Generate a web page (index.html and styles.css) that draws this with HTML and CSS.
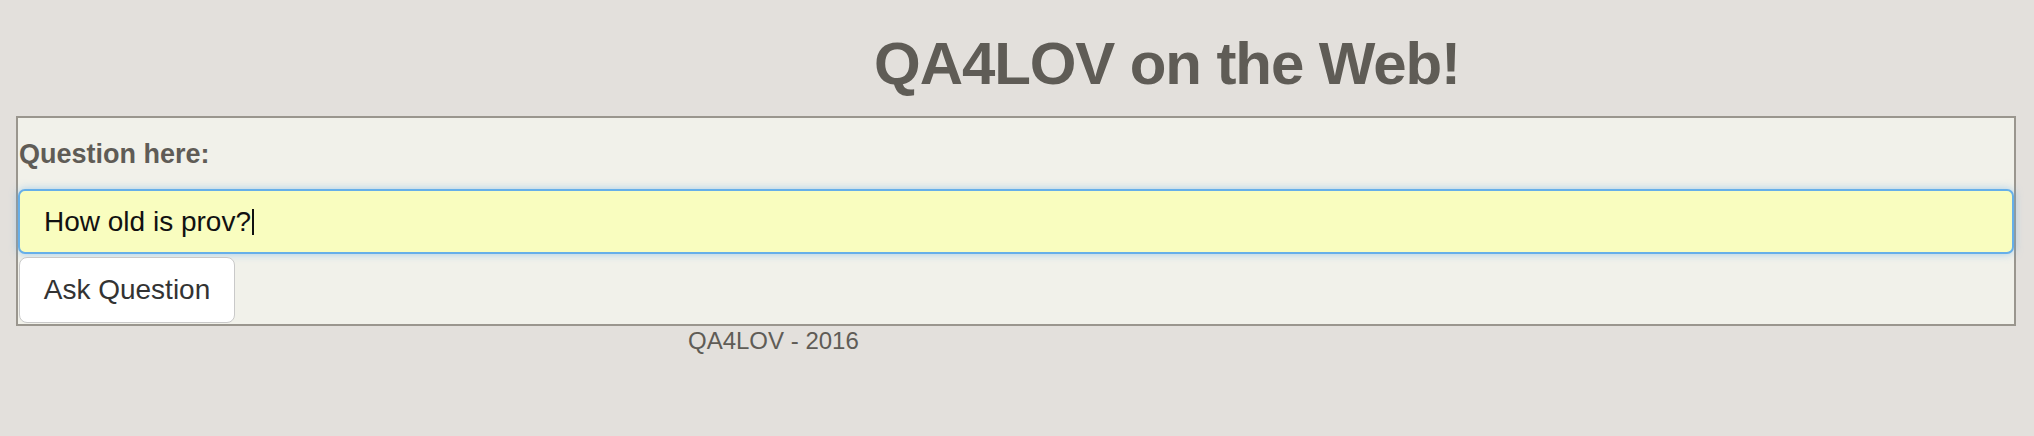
FILE: index.html
```html
<!DOCTYPE html>
<html lang="en">
<head>
<meta charset="utf-8">
<title>QA4LOV on the Web!</title>
<link rel="stylesheet" href="styles.css">
</head>
<body>
<header class="page-header">
  <h1 class="title">QA4LOV on the Web!</h1>
</header>
<form class="qa-box">
  <label class="qa-label" for="q">Question here:</label>
  <div class="qa-field" id="q" role="textbox"><span class="qa-text">How old is prov?</span><span class="qa-caret"></span></div>
  <button type="button" class="qa-button">Ask Question</button>
</form>
<footer class="page-footer">QA4LOV - 2016</footer>
</body>
</html>
```
FILE: styles.css
```css
html, body {
  margin: 0;
  padding: 0;
}
body {
  background: #e3e0dc;
  font-family: "Liberation Sans", Arial, sans-serif;
  color: #5f5c56;
}
.page-header {
  padding: 29px 0 0 300px;
  text-align: center;
}
.title {
  margin: 0;
  font-size: 60px;
  font-weight: bold;
  letter-spacing: -1.1px;
  line-height: 69px;
  color: #5f5c56;
}
.qa-box {
  display: flex;
  flex-direction: column;
  align-items: flex-start;
  margin: 18px 0 0 16px;
  width: 1996px;
  border: 2px solid #9a968e;
  background: #f1f1ea;
  padding: 0 0 1px 0;
}
.qa-label {
  margin: 21px 0 0 1px;
  font-size: 27px;
  font-weight: bold;
  line-height: 31px;
  color: #5f5c56;
}
.qa-field {
  box-sizing: border-box;
  align-self: stretch;
  margin-top: 19px;
  height: 65px;
  display: flex;
  align-items: center;
  padding: 0 24px;
  border: 2px solid #66afe9;
  border-radius: 7px;
  background: #f9fdbf;
  box-shadow: 0 0 9px rgba(102, 175, 233, 0.55);
  font-size: 28px;
  color: #111;
}
.qa-caret {
  display: inline-block;
  width: 2px;
  height: 26px;
  background: #111;
  margin-left: 1px;
}
.qa-button {
  box-sizing: border-box;
  margin: 3px 0 0 1px;
  height: 66px;
  width: 216px;
  padding: 0;
  border: 1px solid #c9c9c9;
  border-radius: 8px;
  background: #fff;
  font-family: "Liberation Sans", Arial, sans-serif;
  font-size: 28px;
  color: #333;
}
.page-footer {
  padding: 0 0 0 688px;
  margin-top: 1px;
  font-size: 24px;
  line-height: 28px;
  color: #5f5c56;
}
```
